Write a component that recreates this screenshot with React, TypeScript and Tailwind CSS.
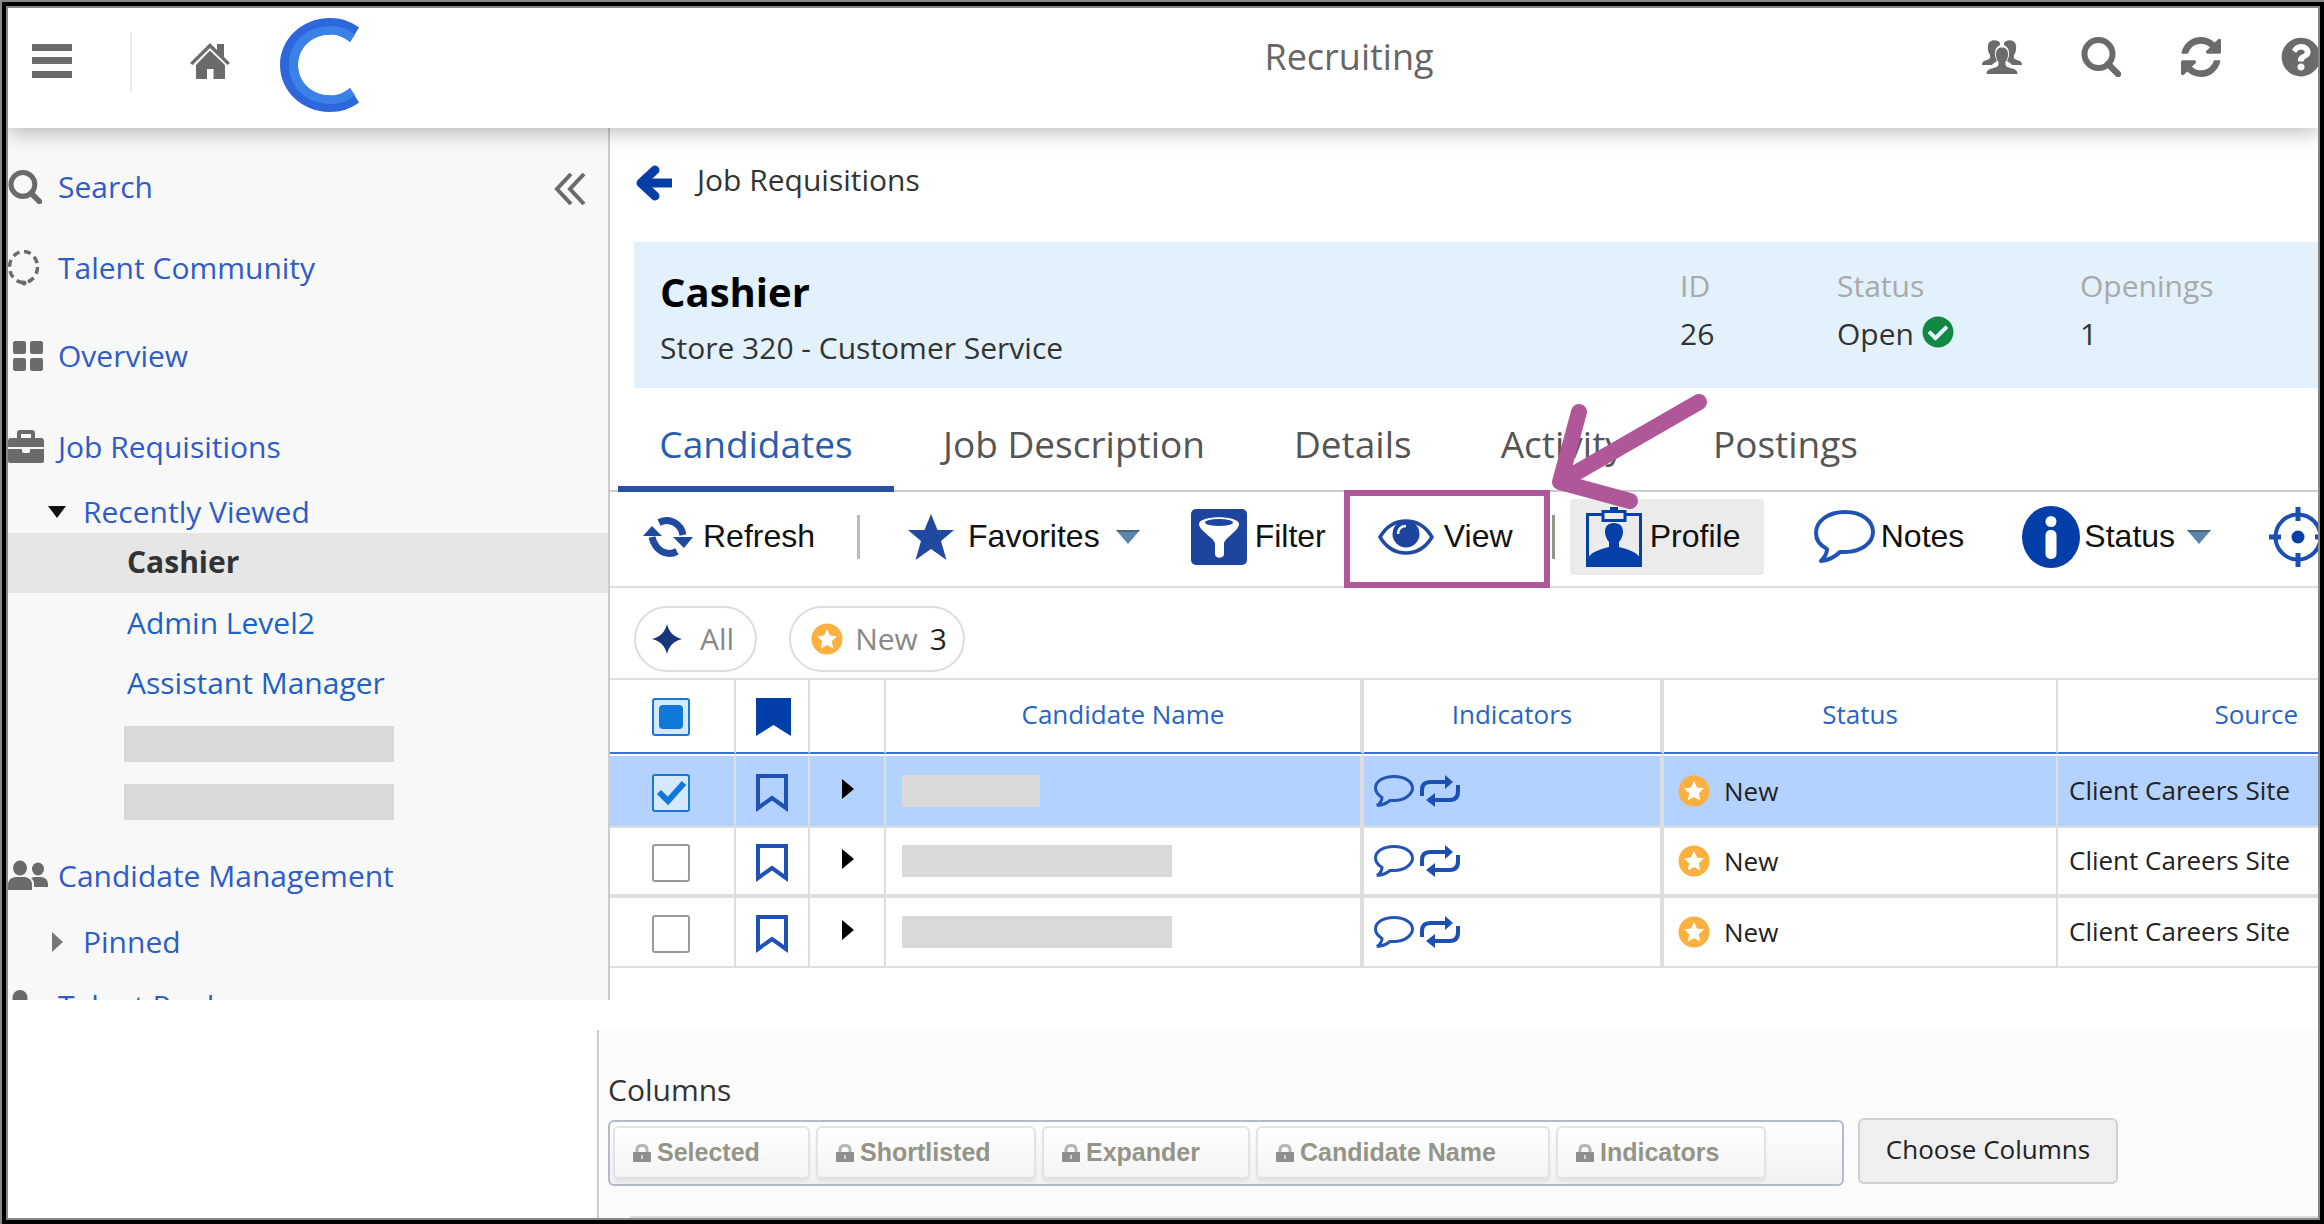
import React from 'react';
import { FaCheckCircle, FaQuestionCircle } from 'react-icons/fa';

interface IconProps {
	className?: string;
}

interface ToolLabelProps {
	children: React.ReactNode;
}

interface NavLinkProps {
	label: string;
	className: string;
	icon: React.ReactNode;
}

interface CandidateRowProps {
	selected?: boolean;
	index: number;
	nameWidth: string;
	rowClass: string;
	cellClass: string;
}

const MenuIcon = () => (
	<svg className="w-10 h-9" viewBox="0 0 40 36" fill="#6b6b6b">
		<path d="M0 1h40v7H0zM0 14h40v7H0zM0 28h40v7H0z" />
	</svg>
);

const HomeIcon = () => (
	<svg className="w-10 h-9" viewBox="0 0 40 36" fill="#6b6b6b">
		<path d="M20 0 27 7V1h7v13l6 6-2.500 2L20 5 2.500 22 0 20z" />
		<path d="M20 7.500 35 22v14H23.500V26h-6.500v10H6V22z" />
	</svg>
);

const Logo = () => (
	<svg className="w-20 h-[94px]" viewBox="0 0 80 94" fill="none">
		<path
			d="M79 9.500C70 3 61 0 50 0 22 0 0 21 0 47s22 47 50 47c11 0 20-3 29-9.500L70 70c-6 5-12 7.500-19 7.500-19 0-33-13-33-30.500s14-30.500 33-30.500c7 0 13 2.500 19 7.500z"
			fill="#2e66dc"
		/>
		<path
			d="M75 16.500C67 10.500 60 8 51 8 26 8 9 25 9 47s17 39 42 39c9 0 16-2.500 24-8.500L70 70c-6 5-12 7.500-19 7.500-19 0-33-13-33-30.500s14-30.500 33-30.500c7 0 13 2.500 19 7.500z"
			fill="#3b82e8"
		/>
	</svg>
);

const GroupIcon = () => (
	<svg className="w-10 h-9" viewBox="0 0 40 36" fill="#6b6b6b">
		<path d="M18 4c-2-4-11-4-12 2-.5 4 0 7 2 10 .5 3 0 4-3 5-4 1-5 2.500-5 5h10c1-2 4-3 5-4-2-3-2.500-7-1.500-11 1-3 3-4 4.500-5zM22 4c2-4 11-4 12 2 .5 4 0 7-2 10-.5 3 0 4 3 5 4 1 5 2.500 5 5H30c-1-2-4-3-5-4 2-3 2.500-7 1.500-11-1-3-3-4-4.500-5z" />
		<path d="M20 8.500c4 0 6 2.500 6 7 0 3-1 5.500-2.500 7.500-.5 4 1 5 5 6 4.500 1 7 2.500 7 6H4.500c0-3.500 2.500-5 7-6 4-1 5.500-2 5-6C15 21 14 18.500 14 15.500c0-4.500 2-7 6-7z" />
	</svg>
);

const SyncIcon = () => (
	<svg className="w-10 h-10" viewBox="0 0 1536 1536" fill="#6b6b6b">
		<path d="M1511 928q0 5-1 7-64 268-268 434.500t-478 166.500q-146 0-282.500-55t-243.500-157l-129 129q-19 19-45 19t-45-19-19-45v-448q0-26 19-45t45-19h448q26 0 45 19t19 45-19 45l-137 137q71 66 161 102t187 36q134 0 250-65t186-179q11-17 53-117 8-23 30-23h192q13 0 22.500 9.500t9.500 22.500zM1536 128v448q0 26-19 45t-45 19h-448q-26 0-45-19t-19-45 19-45l138-138q-148-137-349-137-134 0-250 65t-186 179q-11 17-53 117-8 23-30 23h-199q-13 0-22.500-9.500t-9.500-22.500v-7q65-268 270-434.500t480-166.500q146 0 284 55.500t245 156.500l130-129q19-19 45-19t45 19 19 45z" />
	</svg>
);

const SearchIcon = ({ className }: IconProps) => (
	<svg className={className} viewBox="0 0 40 40" fill="none" stroke="#6b6b6b" strokeWidth="6">
		<circle cx="17.500" cy="17" r="14" />
		<path d="m27 27 10 10" strokeLinecap="round" strokeWidth="6.500" />
	</svg>
);

const DottedCircleIcon = () => (
	<svg className="w-8 h-9" viewBox="0 0 32 36" fill="none" stroke="#6b6b6b" strokeWidth="3.500">
		<ellipse cx="15.500" cy="17" rx="14" ry="15.500" strokeDasharray="7 4.600" />
		<circle cx="16" cy="33" r="2.500" fill="#6b6b6b" stroke="none" />
	</svg>
);

const GridIcon = () => (
	<svg className="w-8 h-8" viewBox="0 0 32 32" fill="#6b6b6b">
		<rect x="1" y="1" width="13" height="13" rx="2" />
		<rect x="18" y="1" width="13" height="13" rx="2" />
		<rect x="1" y="18" width="13" height="13" rx="2" />
		<rect x="18" y="18" width="13" height="13" rx="2" />
	</svg>
);

const BriefcaseIcon = () => (
	<svg className="w-9 h-9" viewBox="0 0 36 36" fill="#6b6b6b">
		<path d="M9 9V4q0-3 3-3h12q3 0 3 3v5h6q3 0 3 3v6H0v-6q0-3 3-3zm4 0h10V5H13z" />
		<path d="M0 20h14v2q0 2 2 2h4q2 0 2-2v-2h14v12q0 2-2 2H2q-2 0-2-2z" />
	</svg>
);

const PeopleIcon = () => (
	<svg className="w-10 h-8" viewBox="0 0 40 32" fill="#6b6b6b">
		<ellipse cx="12" cy="8" rx="7" ry="7.500" />
		<ellipse cx="30" cy="9" rx="6" ry="6.500" />
		<path d="M0 30v-5q0-7 7-8h10q7 1 7 8v5zM26 27v-3q0-4-3-6 2-1 5-1h5q7 1 7 7v3z" />
	</svg>
);

const PersonIcon = () => (
	<svg className="w-10 h-8" viewBox="0 0 40 32" fill="#6b6b6b">
		<ellipse cx="12" cy="8" rx="7.500" ry="8" />
		<path d="M0 32v-5q0-7 7-8h10q7 1 7 8v5z" />
	</svg>
);

const CollapseIcon = () => (
	<svg className="w-8 h-8" viewBox="0 0 32 32" fill="none" stroke="#6b6b6b" strokeWidth="4">
		<path d="M17 1 3 16l14 15M30 1 16 16l14 15" />
	</svg>
);

const BackIcon = () => (
	<svg className="w-9 h-9" viewBox="0 0 36 36" fill="none" stroke="#053fa6" strokeWidth="9">
		<path d="M19 5 5 18l14 13" strokeLinecap="round" strokeLinejoin="round" />
		<path d="M8 18h28" />
	</svg>
);

const RefreshIcon = () => (
	<svg className="w-[50px] h-10" viewBox="0 0 50 40" fill="none" stroke="#2049a0" strokeWidth="7">
		<path d="M16 5.500C27 0 38 7 40 18M34 34.500C23 40 12 33 9 20" />
		<path d="M30 20h20L41 31zM0 19h19L9 9z" fill="#2049a0" stroke="none" />
	</svg>
);

const StarIcon = () => (
	<svg className="w-[46px] h-[46px]" viewBox="0 0 46 46" fill="#2049a0">
		<path d="m23 0 6.500 16H46L33 27l5.500 19L23 35 7.500 46 13 27 0 16h16.500z" />
	</svg>
);

const CaretIcon = () => (
	<svg className="w-6 h-3.5" viewBox="0 0 24 14" fill="#5a86ab">
		<path d="M0 0h24L12 14z" />
		<path d="M0 0h24l-2 2H2z" fill="#4c6674" />
	</svg>
);

const FilterIcon = () => (
	<svg className="w-14 h-14" viewBox="0 0 56 56">
		<rect width="56" height="56" rx="5" fill="#1d459e" />
		<path d="M8 15c0-9 40-9 40 0 0 7-15 14-15 20v10c0 5-9 5-9 0V35C24 29 8 22 8 15z" fill="#fff" />
		<ellipse cx="28" cy="13.500" rx="14" ry="3.500" fill="#1d459e" />
	</svg>
);

const EyeIcon = () => (
	<svg className="w-14 h-9" viewBox="0 0 56 36" fill="none">
		<path
			d="M2 18C8 8 17 2 28 2s20 6 26 16c-6 10-15 16-26 16S8 28 2 18z"
			stroke="#2049a0"
			strokeWidth="3.500"
		/>
		<circle cx="28" cy="15" r="13.500" fill="#1d459e" />
		<path d="M20 15c0-5 3-8 8-8" stroke="#fff" strokeWidth="2.500" />
	</svg>
);

const ProfileIcon = () => (
	<svg className="w-14 h-[60px]" viewBox="0 0 56 60" fill="none" stroke="#0540a8" strokeWidth="3">
		<path d="M16 7.500H1.500v51h53v-51H40" />
		<path d="M17 4.500h22v9H17z" />
		<path d="M24 0h8v4h-8zM2 58v-7c4-7 14-9 21-11v-5c-6-7-6-19 5-19s11 12 5 19v5c7 2 17 4 21 11v7z" fill="#0540a8" stroke="none" />
	</svg>
);

const NotesIcon = () => (
	<svg className="w-[61px] h-[54px]" viewBox="0 0 61 54" fill="none" stroke="#1f52b4" strokeWidth="4">
		<path
			d="M13 39C5 35 2 29 2 23 2 11 14 2 31 2s28 9 28 20-12 20-28 20h-5c-5 5-11 8-19 9 4-4 6-8 6-12z"
			strokeLinejoin="round"
		/>
	</svg>
);

const InfoIcon = () => (
	<svg className="w-[58px] h-[62px]" viewBox="0 0 58 62" fill="#fff">
		<ellipse cx="29" cy="31" rx="29" ry="31" fill="#023ea7" />
		<circle cx="29" cy="15.500" r="5.500" />
		<rect x="23.500" y="24" width="11" height="29" rx="5" />
	</svg>
);

const TargetIcon = () => (
	<svg className="w-[60px] h-[60px]" viewBox="0 0 60 60" fill="none" stroke="#1c4fb2" strokeWidth="4">
		<circle cx="29" cy="30" r="22.500" />
		<circle cx="29" cy="30" r="6.500" fill="#023ea7" stroke="none" />
		<path d="M29 0v14M29 46v14M0 30h12M46 30h12" strokeWidth="5" />
	</svg>
);

const SparkIcon = () => (
	<svg className="w-[30px] h-[30px]" viewBox="0 0 30 30" fill="#18357c">
		<path d="M15 0c2 8 6 12.500 15 15-9 2.500-13 7-15 15-2-8-6-12.500-15-15C9 12.500 13 8 15 0z" />
	</svg>
);

const NewIcon = () => (
	<svg className="w-8 h-8 shrink-0" viewBox="0 0 32 32">
		<circle cx="16" cy="16" r="15.500" fill="#fbb040" />
		<path d="m16 6 3 6.500 7 .8-5.200 5 1.400 7.200L16 22l-6.200 3.500 1.400-7.200-5.200-5 7-.8z" fill="#fff" />
	</svg>
);

const BookmarkIcon = ({ filled }: { filled?: boolean }) => (
	<svg className="w-9 h-[38px]" viewBox="0 0 36 38" fill={filled ? '#023ea7' : 'none'}>
		{filled ? (
			<path d="M0 0h35v38L17.500 27 0 38z" />
		) : (
			<path d="M2 2h28v32L16 24 2 34z" stroke="#1f52b4" strokeWidth="4" />
		)}
	</svg>
);

const CommentIcon = () => (
	<svg className="w-10 h-8" viewBox="0 0 40 32" fill="none" stroke="#2355b6" strokeWidth="3">
		<path d="M8 22.500C4 20 1.500 17 1.500 13 1.500 6.500 9 1.500 20 1.500S38.500 7 38.500 13 31 25.500 20 25.500h-4C13 28 9 30 3 30.500c3-2 5-5 5-8z" />
	</svg>
);

const RepeatIcon = () => (
	<svg className="w-10 h-8" viewBox="0 0 40 32" fill="none" stroke="#1c4fb2" strokeWidth="4">
		<path d="M2 21v-6q0-8 8-8h18M38 10v6q0 9-8 9H12" />
		<path d="m25 0 8 7-8 7zM15 18l-9 7 9 7z" fill="#1c4fb2" stroke="none" />
	</svg>
);

const LockIcon = () => (
	<svg className="w-[18px] h-[18px]" viewBox="0 0 18 18" fill="none">
		<path d="M4 9V5.500Q4 1.500 9 1.500t5 4V9" stroke="#b5b5b5" strokeWidth="3" />
		<rect y="8" width="18" height="10" rx="1" fill="#8e8e8e" />
		<path d="M8 11h2v4H8z" fill="#d4d4d4" />
	</svg>
);

const ToolLabel = ({ children }: ToolLabelProps) => (
	<span className="pb-0.5 font-['Liberation_Sans',sans-serif] text-[32px] leading-10 text-[#111]">{children}</span>
);

const NavLink = ({ label, className, icon }: NavLinkProps) => (
	<li className={className}>
		<span className="w-[50px] shrink-0">{icon}</span>
		<a href="#">{label}</a>
	</li>
);

const Header = () => (
	<header className="relative z-10 flex h-[120px] items-start justify-between bg-white shadow-[0_4px_20px_rgba(0,0,0,0.28)]">
		<div className="flex w-[890px] items-start pl-6">
			<button aria-label="Menu" className="mt-[35px]">
				<MenuIcon />
			</button>
			<span className="mt-6 ml-[58px] h-[60px] w-0.5 bg-[#e8e8e8]" />
			<a href="#" aria-label="Home" className="mt-[35px] ml-[58px]">
				<HomeIcon />
			</a>
			<a href="#" aria-label="Dashboard" className="mt-2.5 ml-[50px]">
				<Logo />
			</a>
		</div>
		<h1 className="mt-6 text-[36px] leading-[50px] text-[#666]">Recruiting</h1>
		<div className="flex w-[518px] shrink-0 items-center overflow-hidden pt-[29px] pl-[182px] text-[#6b6b6b]">
			<button aria-label="Community" className="mr-[59px] shrink-0">
				<GroupIcon />
			</button>
			<button aria-label="Search" className="mr-[60px] shrink-0">
				<SearchIcon className="w-10 h-10" />
			</button>
			<button aria-label="Refresh" className="mr-[60px] shrink-0">
				<SyncIcon />
			</button>
			<button aria-label="Help" className="shrink-0">
				<FaQuestionCircle className="h-10 w-10" />
			</button>
		</div>
	</header>
);

const Sidebar = () => (
	<nav className="w-[602px] shrink-0 border-r-2 border-[#ccc] bg-[#f8f8f8] pt-[19px] text-[30px] leading-10 text-[#2f5cc5]">
		<ul>
			<li className="flex h-20 items-center">
				<span className="w-[50px]">
					<SearchIcon className="w-[34px] h-[34px]" />
				</span>
				<a href="#">Search</a>
				<button aria-label="Collapse" className="ml-auto mr-[22px] pt-1">
					<CollapseIcon />
				</button>
			</li>
			<NavLink label="Talent Community" className="flex h-[82px] items-center" icon={<DottedCircleIcon />} />
			<NavLink label="Overview" className="flex h-[94px] items-center" icon={<div className="pl-1"><GridIcon /></div>} />
			<NavLink label="Job Requisitions" className="flex h-[88px] items-center" icon={<BriefcaseIcon />} />
			<li className="flex h-[42px] items-center pl-10">
				<svg className="w-[35px] h-3" viewBox="0 0 35 12">
					<path d="M0 0h18L9 12z" fill="#111" />
				</svg>
				<a href="#">Recently Viewed</a>
			</li>
			<li className="flex h-[60px] items-center bg-[#e6e6e6] pb-0.5 pl-[119px] font-bold text-[#333]">
				<a href="#">Cashier</a>
			</li>
			<li className="flex h-[60px] items-center pl-[119px] text-[#1d62c4]">
				<a href="#">Admin Level2</a>
			</li>
			<li className="flex h-[60px] items-center pl-[119px] text-[#1d62c4]">
				<a href="#">Assistant Manager</a>
			</li>
			<li className="ml-[116px] mt-[13px] h-9 w-[270px] bg-[#d9d9d9]" />
			<li className="ml-[116px] mt-[22px] h-9 w-[270px] bg-[#d9d9d9]" />
			<NavLink label="Candidate Management" className="mt-3 flex h-[88px] items-center" icon={<PeopleIcon />} />
			<li className="flex h-11 items-center pl-11">
				<svg className="w-[31px] h-5" viewBox="0 0 31 20">
					<path d="M0 0v20l11-10z" fill="#777" />
				</svg>
				<a href="#">Pinned</a>
			</li>
			<NavLink label="Talent Pool" className="flex h-[84px] items-center" icon={<PersonIcon />} />
		</ul>
	</nav>
);

const JobCard = () => (
	<section className="ml-6 flex justify-between bg-[#e3f1fc] pt-6 pb-5 pl-[26px] text-[30px] leading-10 text-[#333]">
		<div>
			<h2 className="text-[40px] font-bold leading-[52px] text-black">Cashier</h2>
			<p className="mt-2.5">Store 320 - Customer Service</p>
		</div>
		<dl className="grid grid-cols-[157px_243px_238px]">
			<div>
				<dt className="text-[#a9a9a9]">ID</dt>
				<dd className="mt-2">26</dd>
			</div>
			<div>
				<dt className="text-[#a9a9a9]">Status</dt>
				<dd className="mt-2 flex items-center gap-2">
					Open <FaCheckCircle className="mb-1 h-8 w-8 text-[#108a43]" />
				</dd>
			</div>
			<div>
				<dt className="text-[#a9a9a9]">Openings</dt>
				<dd className="mt-2">1</dd>
			</div>
		</dl>
	</section>
);

const Tabs = () => (
	<div className="flex h-[104px] gap-[9px] border-b-2 border-[#ccc] pl-2 text-[37px] text-[#555]">
		<button className="h-[104px] w-[276px] shrink-0 border-b-[6px] border-[#284fa3] pt-3.5 text-[#2a5db0]">
			Candidates
		</button>
		{['Job Description', 'Details', 'Activity', 'Postings'].map((tab) => (
			<button key={tab} className="px-10 pt-2.5">
				{tab}
			</button>
		))}
	</div>
);

const Toolbar = () => (
	<div className="flex h-24 items-center border-b-2 border-[#ddd] pb-1 pl-[33px] *:shrink-0">
		<button className="flex items-center gap-2.5">
			<RefreshIcon />
			<ToolLabel>Refresh</ToolLabel>
		</button>
		<span className="ml-[42px] h-11 w-[3px] bg-[#bbb]" />
		<button className="ml-12 flex items-center gap-3.5">
			<StarIcon />
			<ToolLabel>Favorites</ToolLabel>
			<span className="pl-0.5">
				<CaretIcon />
			</span>
		</button>
		<button className="ml-[51px] flex items-center gap-2">
			<FilterIcon />
			<ToolLabel>Filter</ToolLabel>
		</button>
		<div className="relative ml-[18px] flex h-full w-[206px] items-center">
			<button className="flex items-center gap-2.5 pl-[34px]">
				<EyeIcon />
				<ToolLabel>View</ToolLabel>
			</button>
			<span className="pointer-events-none absolute inset-x-0 -top-0.5 -bottom-1.5 border-[6px] border-[#b0579a]" />
			<svg
				className="pointer-events-none absolute -top-[102px] left-[200px] z-10 h-[130px] w-44"
				viewBox="0 0 176 130"
				fill="none"
				stroke="#b0579a"
				strokeWidth="16"
				strokeLinecap="round"
				strokeLinejoin="round"
			>
				<path d="M155 12 16 92M35 22 16 92l70 19" />
			</svg>
		</div>
		<span className="ml-0.5 h-11 w-[3px] bg-[#96968c]" />
		<button className="ml-[15px] flex h-[76px] w-[194px] items-center gap-2 rounded bg-[#ebebeb] pl-4">
			<ProfileIcon />
			<ToolLabel>Profile</ToolLabel>
		</button>
		<button className="ml-[50px] flex items-center gap-1.5">
			<NotesIcon />
			<ToolLabel>Notes</ToolLabel>
		</button>
		<button className="ml-[58px] flex items-center gap-1">
			<InfoIcon />
			<ToolLabel>Status</ToolLabel>
			<span className="pl-2">
				<CaretIcon />
			</span>
		</button>
		<button aria-label="Locate" className="ml-[58px]">
			<TargetIcon />
		</button>
	</div>
);

const Chips = () => (
	<div className="flex gap-8 pt-[18px] pb-1.5 pl-6 text-[30px] leading-10 text-[#888]">
		<button className="flex h-[66px] items-center gap-[18px] rounded-full border-2 border-[#ddd] pl-4 pr-[21px]">
			<SparkIcon />
			All
		</button>
		<button className="flex h-[66px] items-center gap-3 rounded-full border-2 border-[#ddd] pl-5 pr-4">
			<NewIcon />
			New <span className="text-[#222]">3</span>
		</button>
	</div>
);

const CandidateRow = ({ selected, index, nameWidth, rowClass, cellClass }: CandidateRowProps) => (
	<tr className={rowClass}>
		<td className={`border-r-2 pt-1 ${cellClass}`}>
			<label className="relative ml-[42px] block h-[38px] w-[38px]">
				<input
					type="checkbox"
					defaultChecked={selected}
					aria-label={`Select candidate ${index}`}
					className="h-[38px] w-[38px] appearance-none rounded-[3px] border-2 border-[#999] bg-white checked:border-[#1478d4] checked:bg-[#d5e8fc]"
				/>
				{selected && (
					<svg className="pointer-events-none absolute inset-0" viewBox="0 0 38 38" fill="none">
						<path d="m7 18 9 9L32 9" stroke="#0f78d8" strokeWidth="6" />
					</svg>
				)}
			</label>
		</td>
		<td className={`border-r-2 pl-5 pt-1 ${cellClass}`}>
			<BookmarkIcon />
		</td>
		<td className={`border-r-2 pl-8 ${cellClass}`}>
			<button aria-label="Expand" className="block pb-1">
				<svg className="w-3 h-5" viewBox="0 0 12 20">
					<path d="M0 0v20l12-10z" />
				</svg>
			</button>
		</td>
		<td className={`border-r-4 pl-4 ${cellClass}`}>
			<div className={`h-8 bg-[#d9d9d9] ${nameWidth}`} />
		</td>
		<td className={`border-r-4 pl-2.5 ${cellClass}`}>
			<div className="flex gap-1.5">
				<CommentIcon />
				<RepeatIcon />
			</div>
		</td>
		<td className={`border-r-2 pl-3.5 ${cellClass}`}>
			<div className="flex items-center gap-3.5">
				<NewIcon />
				New
			</div>
		</td>
		<td className={`whitespace-nowrap pb-0.5 pl-[11px] ${cellClass}`}>Client Careers Site</td>
	</tr>
);

const CandidateTable = () => (
	<table className="w-full table-fixed border-separate border-spacing-0 border-t-2 border-[#ddd] text-[26px] leading-8 text-[#222]">
		<colgroup>
			<col className="w-[126px]" />
			<col className="w-[74px]" />
			<col className="w-[76px]" />
			<col className="w-[478px]" />
			<col className="w-[300px]" />
			<col className="w-[394px]" />
			<col />
		</colgroup>
		<thead>
			<tr className="h-[74px] text-[#2764c6] *:border-b-2 *:border-r-[#ddd] *:border-b-[#3b72cf] *:font-normal">
				<th className="border-r-2 pt-0.5">
					<label className="relative ml-[42px] block h-[38px] w-[38px]">
						<input
							type="checkbox"
							aria-label="Select all"
							className="h-[38px] w-[38px] appearance-none rounded-[3px] border-2 border-[#1478d4] bg-[#d5e8fc]"
						/>
						<span className="pointer-events-none absolute inset-[7px] rounded bg-[#0f78d8]" />
					</label>
				</th>
				<th className="border-r-2 pl-5 pt-0.5">
					<BookmarkIcon filled />
				</th>
				<th className="border-r-2" />
				<th className="border-r-4 pb-1">Candidate Name</th>
				<th className="border-r-4 pb-1">Indicators</th>
				<th className="border-r-2 pb-1">Status</th>
				<th className="pb-1 pr-5 text-right">Source</th>
			</tr>
		</thead>
		<tbody>
			<CandidateRow
				selected
				index={1}
				nameWidth="w-[138px]"
				rowClass="h-[74px] bg-[#b3d2ff]"
				cellClass="border-t-2 border-b-2 border-[#ddd] border-t-white"
			/>
			<CandidateRow index={2} nameWidth="w-[270px]" rowClass="h-[70px]" cellClass="border-b-4 border-[#ddd]" />
			<CandidateRow index={3} nameWidth="w-[270px]" rowClass="h-[70px]" cellClass="border-b-2 border-[#ddd]" />
		</tbody>
	</table>
);

const ColumnsPanel = () => (
	<section className="ml-[589px] mt-[30px] border-l-2 border-[#ccc] bg-[#fbfbfb] pt-[38px] pl-[9px]">
		<h3 className="text-[30px] leading-[44px] text-[#333]">Columns</h3>
		<div className="mt-1.5 flex items-start gap-3.5">
			<ul className="mt-0.5 flex h-[66px] w-[1236px] gap-1.5 rounded-md border-2 border-[#b3bac9] bg-linear-to-b from-white to-[#f1f1f2] px-[3px] pt-1 font-['Liberation_Sans',sans-serif] text-[25px] font-bold text-[#949488]">
				{[
					{ label: 'Selected', width: 'w-[197px]' },
					{ label: 'Shortlisted', width: 'w-[220px]' },
					{ label: 'Expander', width: 'w-[208px]' },
					{ label: 'Candidate Name', width: 'w-[294px]' },
					{ label: 'Indicators', width: 'w-[210px]' },
				].map(({ label, width }) => (
					<li
						key={label}
						className={`flex h-[53px] items-center gap-1.5 whitespace-nowrap rounded-md border-2 border-[#e0e3ea] bg-linear-to-b from-white to-[#f4f4f4] pl-[18px] shadow-[0_3px_3px_rgba(0,0,0,0.06)] ${width}`}
					>
						<LockIcon />
						{label}
					</li>
				))}
			</ul>
			<button className="h-[66px] w-[260px] rounded-md border-2 border-[#d0d0d0] bg-[#efefef] pb-1 text-[26px] text-[#222]">
				Choose Columns
			</button>
		</div>
		<div className="ml-[22px] mt-[30px] h-0.5 bg-[#ddd]" />
	</section>
);

const App = () => {
	return (
		<div className="border-t-2 border-l-2 border-[#888] font-['Open_Sans',sans-serif]">
			<div className="border-4 border-black">
				<div className="overflow-hidden border-2 border-[#888] bg-white">
					<Header />
					<div className="flex h-[872px] overflow-hidden">
						<Sidebar />
						<main className="min-w-0 flex-1 overflow-hidden">
							<div className="flex h-[114px] items-center gap-[25px] pb-1 pl-[26px] text-[30px] text-[#333]">
								<BackIcon />
								<a href="#" className="pb-2">
									Job Requisitions
								</a>
							</div>
							<JobCard />
							<Tabs />
							<Toolbar />
							<Chips />
							<CandidateTable />
						</main>
					</div>
					<ColumnsPanel />
				</div>
			</div>
		</div>
	);
};

export default App;
